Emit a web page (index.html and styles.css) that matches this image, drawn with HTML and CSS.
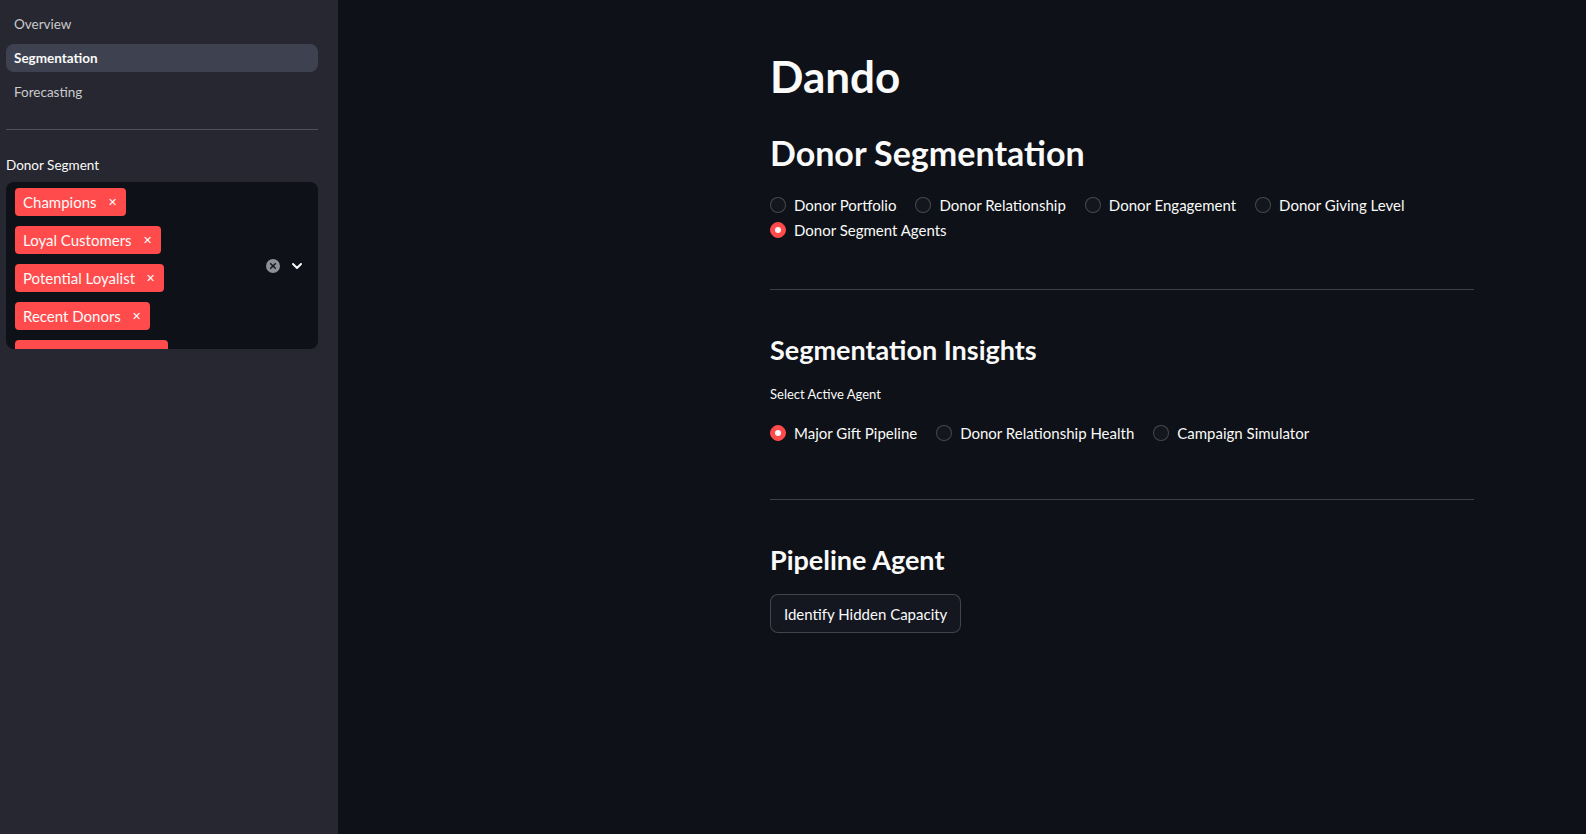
FILE: index.html
```html
<!DOCTYPE html>
<html lang="en">
<head>
<meta charset="utf-8">
<title>Dando</title>
<link rel="stylesheet" href="styles.css">
</head>
<body>
<div class="app">
  <aside class="sidebar">
    <nav class="nav">
      <div class="nav-item">Overview</div>
      <div class="nav-item active">Segmentation</div>
      <div class="nav-item">Forecasting</div>
    </nav>
    <hr class="side-rule">
    <div class="field-label">Donor Segment</div>
    <div class="multiselect">
      <div class="tags">
        <span class="tag">Champions<span class="tag-x">&#x2715;</span></span>
        <span class="tag">Loyal Customers<span class="tag-x">&#x2715;</span></span>
        <span class="tag">Potential Loyalist<span class="tag-x">&#x2715;</span></span>
        <span class="tag">Recent Donors<span class="tag-x">&#x2715;</span></span>
        <span class="tag tag-cut">Need Attention<span class="tag-x">&#x2715;</span></span>
      </div>
      <div class="ms-icons">
        <svg class="clear-icon" width="14" height="14" viewBox="0 0 14 14"><circle cx="7" cy="7" r="7" fill="#8e8f94"/><path d="M4.7 4.7 L9.3 9.3 M9.3 4.7 L4.7 9.3" stroke="#1a1b22" stroke-width="1.6" stroke-linecap="round"/></svg>
        <svg class="chev-icon" width="12" height="12" viewBox="0 0 12 12"><path d="M2 4 L6 8 L10 4" fill="none" stroke="#fafafa" stroke-width="2" stroke-linecap="round" stroke-linejoin="round"/></svg>
      </div>
    </div>
  </aside>
  <main class="main">
    <div class="content">
      <h1 class="title">Dando</h1>
      <h2 class="h2">Donor Segmentation</h2>
      <div class="radio-group">
        <label class="radio"><span class="dot"></span>Donor Portfolio</label>
        <label class="radio"><span class="dot"></span>Donor Relationship</label>
        <label class="radio"><span class="dot"></span>Donor Engagement</label>
        <label class="radio"><span class="dot"></span>Donor Giving Level</label>
        <label class="radio"><span class="dot on"></span>Donor Segment Agents</label>
      </div>
      <hr class="rule rule-1">
      <h3 class="h3">Segmentation Insights</h3>
      <div class="small-label">Select Active Agent</div>
      <div class="radio-group single">
        <label class="radio"><span class="dot on"></span>Major Gift Pipeline</label>
        <label class="radio"><span class="dot"></span>Donor Relationship Health</label>
        <label class="radio"><span class="dot"></span>Campaign Simulator</label>
      </div>
      <hr class="rule rule-2">
      <h3 class="h3 h3-b">Pipeline Agent</h3>
      <button class="btn">Identify Hidden Capacity</button>
    </div>
  </main>
</div>
</body>
</html>
```
FILE: styles.css
```css
* { box-sizing: border-box; }
html, body { margin: 0; padding: 0; }
body {
  background: #0e1117;
  color: #fafafa;
  font-family: Lato, "Noto Sans", "Liberation Sans", sans-serif;
  width: 1586px;
  height: 834px;
  overflow: hidden;
}
.app { display: flex; height: 834px; }

/* sidebar */
.sidebar {
  width: 338px;
  flex: 0 0 338px;
  background: #262730;
  padding: 10px 20px 0 6px;
}
.nav { display: flex; flex-direction: column; gap: 6px; }
.nav-item {
  height: 28px;
  line-height: 28px;
  padding-left: 8px;
  font-size: 13.5px;
  color: rgba(250,250,250,0.78);
  border-radius: 8px;
}
.nav-item.active {
  background: rgba(151,166,195,0.22);
  color: #fafafa;
  font-weight: 700;
}
.side-rule {
  border: 0;
  border-top: 1px solid rgba(250,250,250,0.2);
  margin: 23px 0 0 0;
  height: 0;
}
.field-label {
  font-size: 13.5px;
  line-height: 20px;
  margin-top: 25px;
}
.multiselect {
  margin-top: 7px;
  height: 167px;
  background: #0e1117;
  border-radius: 8px;
  overflow: hidden;
  display: flex;
  align-items: center;
}
.tags {
  flex: 1;
  align-self: flex-start;
  display: flex;
  flex-direction: column;
  align-items: flex-start;
  gap: 10px;
  padding: 6px 0 0 9px;
}
.tag {
  background: #ff4b4b;
  color: #fafafa;
  height: 28px;
  line-height: 28px;
  border-radius: 4px;
  padding: 0 9px 0 8px;
  font-size: 15px;
  display: inline-flex;
  align-items: center;
  white-space: nowrap;
}
.tag-cut { padding-right: 24px; }
.tag-x {
  font-size: 11px;
  margin-left: 11px;
}
.ms-icons {
  display: flex;
  align-items: center;
  gap: 11px;
  padding-right: 15px;
}
.clear-icon, .chev-icon { display: block; }

/* main */
.main { flex: 1; }
.content {
  width: 704px;
  margin-left: 432px;
  padding-top: 49px;
}
.title {
  margin: 0;
  font-size: 44px;
  line-height: 54px;
  font-weight: 700;
}
.h2 {
  margin: 29px 0 0 0;
  font-size: 34px;
  line-height: 42px;
  font-weight: 700;
}
.radio-group {
  display: flex;
  flex-wrap: wrap;
  column-gap: 19px;
  row-gap: 1px;
  margin-top: 19px;
  width: 690px;
}
.radio {
  display: inline-flex;
  align-items: center;
  height: 24px;
  font-size: 15px;
  gap: 8px;
}
.dot {
  width: 16px;
  height: 16px;
  border-radius: 50%;
  border: 1px solid rgba(250,250,250,0.22);
  background: #14161e;
  display: inline-block;
  position: relative;
}
.dot.on {
  background: #ff4b4b;
  border-color: #ff4b4b;
}
.dot.on::after {
  content: "";
  position: absolute;
  left: 4px; top: 4px;
  width: 6px; height: 6px;
  border-radius: 50%;
  background: #fafafa;
}
.rule {
  border: 0;
  border-top: 1px solid rgba(250,250,250,0.2);
  margin: 47px 0 0 0;
  height: 0;
}
.rule-2 { margin-top: 54px; }
.h3 {
  margin: 43px 0 0 0;
  font-size: 27px;
  line-height: 34px;
  font-weight: 700;
}
.small-label {
  font-size: 13px;
  line-height: 20px;
  margin-top: 17px;
}
.radio-group.single { margin-top: 17px; }
.btn {
  margin-top: 17px;
  height: 39px;
  padding: 0 13px;
  background: #141720;
  color: #fafafa;
  border: 1px solid rgba(250,250,250,0.2);
  border-radius: 8px;
  font-family: inherit;
  font-size: 15px;
  cursor: pointer;
}
```
